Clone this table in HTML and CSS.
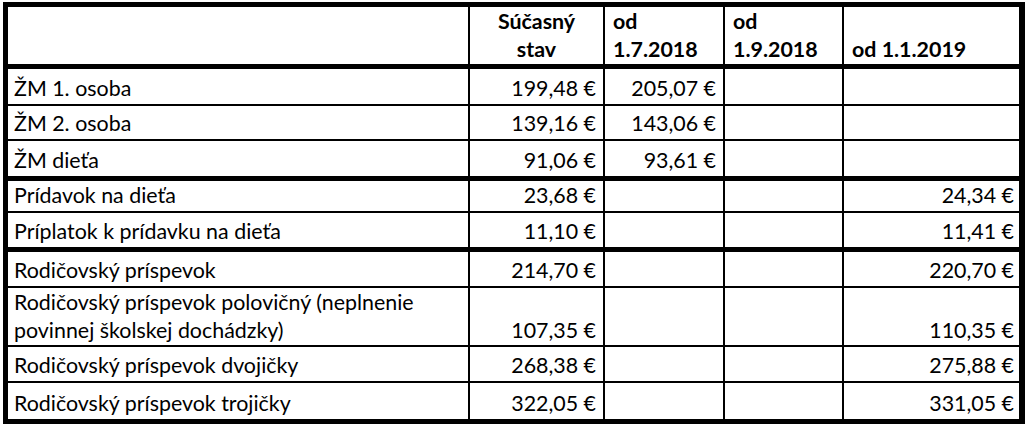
FILE: index.html
```html
<!DOCTYPE html>
<html lang="sk">
<head>
<meta charset="utf-8">
<title>Sumy</title>
<link rel="stylesheet" href="styles.css">
</head>
<body>
<table class="grid">
  <colgroup>
    <col class="c-label">
    <col class="c-now">
    <col class="c-jul">
    <col class="c-sep">
    <col class="c-jan">
  </colgroup>
  <tr class="head thick">
    <th class="label"></th>
    <th class="center">Súčasný<br>stav</th>
    <th>od<br>1.7.2018</th>
    <th>od<br>1.9.2018</th>
    <th class="last">od 1.1.2019</th>
  </tr>
  <tr class="h35">
    <td class="label">ŽM 1. osoba</td>
    <td class="num">199,48 €</td>
    <td class="num">205,07 €</td>
    <td></td>
    <td class="last"></td>
  </tr>
  <tr class="h33">
    <td class="label">ŽM 2. osoba</td>
    <td class="num">139,16 €</td>
    <td class="num">143,06 €</td>
    <td></td>
    <td class="last"></td>
  </tr>
  <tr class="h35 thick">
    <td class="label">ŽM dieťa</td>
    <td class="num">91,06 €</td>
    <td class="num">93,61 €</td>
    <td></td>
    <td class="last"></td>
  </tr>
  <tr class="h30">
    <td class="label">Prídavok na dieťa</td>
    <td class="num">23,68 €</td>
    <td></td>
    <td></td>
    <td class="num last">24,34 €</td>
  </tr>
  <tr class="h34 thick">
    <td class="label">Príplatok k prídavku na dieťa</td>
    <td class="num">11,10 €</td>
    <td></td>
    <td></td>
    <td class="num last">11,41 €</td>
  </tr>
  <tr class="h34">
    <td class="label">Rodičovský príspevok</td>
    <td class="num">214,70 €</td>
    <td></td>
    <td></td>
    <td class="num last">220,70 €</td>
  </tr>
  <tr class="h57">
    <td class="label">Rodičovský príspevok polovičný (neplnenie<br>povinnej školskej dochádzky)</td>
    <td class="num">107,35 €</td>
    <td></td>
    <td></td>
    <td class="num last">110,35 €</td>
  </tr>
  <tr class="h34">
    <td class="label">Rodičovský príspevok dvojičky</td>
    <td class="num">268,38 €</td>
    <td></td>
    <td></td>
    <td class="num last">275,88 €</td>
  </tr>
  <tr class="h36 thick">
    <td class="label">Rodičovský príspevok trojičky</td>
    <td class="num">322,05 €</td>
    <td></td>
    <td></td>
    <td class="num last">331,05 €</td>
  </tr>
</table>
</body>
</html>
```

FILE: styles.css
```css
html, body {
  margin: 0;
  padding: 0;
  background: #ffffff;
}

body {
  font-family: Lato, "Liberation Sans", sans-serif;
  font-size: 21.4px;
  color: #000000;
}

.grid {
  margin: 2px 0 0 3px;
  border-collapse: separate;
  border-spacing: 0;
  border-top: 5px solid #000;
  border-left: 5px solid #000;
  table-layout: fixed;
  width: 1022px;
}

.c-label { width: 462px; }
.c-now { width: 135px; }
.c-jul { width: 120px; }
.c-sep { width: 119px; }
.c-jan { width: 181px; }

.grid th,
.grid td {
  box-sizing: border-box;
  padding: 0 6px 1px 7px;
  border-right: 2px solid #000;
  border-bottom: 2px solid #000;
  vertical-align: bottom;
  line-height: 29px;
  white-space: nowrap;
  text-align: left;
}

.grid th {
  font-weight: 700;
  padding-left: 8px;
}

.grid th.center {
  text-align: center;
  padding-left: 0;
  padding-right: 0;
}

.grid .label {
  padding-left: 6px;
}

.grid .num {
  text-align: right;
  padding-right: 7px;
}

.grid td.num.last {
  padding-right: 5px;
}

.grid .last {
  border-right-width: 6px;
}

.grid tr.thick > th,
.grid tr.thick > td {
  border-bottom-width: 5px;
}

.grid tr.head > th,
.grid tr.h57 > td {
  line-height: 28px;
  padding-bottom: 1px;
}

.head { height: 62px; }
.h30 { height: 32px; }
.h33 { height: 35px; }
.h34 { height: 36px; }
.h35 { height: 37px; }
.h36 { height: 38px; }
.h57 { height: 59px; }

.grid tr.thick.h35 { height: 40px; }
.grid tr.thick.h34 { height: 39px; }
.grid tr.thick.h36 { height: 41px; }
```
